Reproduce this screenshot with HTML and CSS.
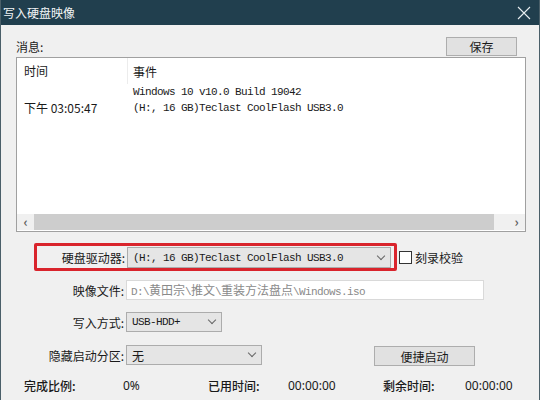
FILE: index.html
```html
<!DOCTYPE html>
<html lang="zh-CN">

<head>
    <meta charset="UTF-8">
    <title>写入硬盘映像</title>
    <link rel="stylesheet" href="styles.css">
</head>

<body>
    <div class="window">
        <!-- 标题栏 -->
        <div class="titlebar">
            <span class="title">写入硬盘映像</span>
            <svg class="close" width="14" height="14" viewBox="0 0 14 14">
                <path d="M1 1 L13 13 M13 1 L1 13" stroke="#e8eef0" stroke-width="1.1" fill="none" />
            </svg>
        </div>

        <div class="content">
            <!-- 消息区 -->
            <div class="msg-head">
                <span>消息:</span>
                <button class="btn btn-save">保存</button>
            </div>
            <div class="listbox">
                <div class="list-header">
                    <div class="col-time">时间</div>
                    <div class="col-event">事件</div>
                </div>
                <div class="list-body">
                    <div class="list-row">
                        <div class="col-time"></div>
                        <div class="col-event mono">Windows 10 v10.0 Build 19042</div>
                    </div>
                    <div class="list-row">
                        <div class="col-time">下午 03:05:47</div>
                        <div class="col-event mono">(H:, 16 GB)Teclast CoolFlash USB3.0</div>
                    </div>
                </div>
                <div class="hscroll">
                    <span class="arrow">&#x2039;</span>
                    <span class="thumb"></span>
                    <span class="arrow">&#x203A;</span>
                </div>
            </div>

            <!-- 设置区 -->
            <div class="row row-drive">
                <div class="highlight">
                    <label class="label label-inner">硬盘驱动器:</label>
                    <div class="combo combo-drive">
                        <span class="mono">(H:, 16 GB)Teclast CoolFlash USB3.0</span>
                        <span class="chev"></span>
                    </div>
                </div>
                <span class="checkbox"></span>
                <span class="check-text">刻录校验</span>
            </div>

            <div class="row row-file">
                <label class="label">映像文件:</label>
                <div class="input mono">D:\<span class="cjk">黄田宗</span>\<span class="cjk">推文</span>\<span class="cjk">重装方法盘点</span>\Windows.iso</div>
            </div>

            <div class="row row-mode">
                <label class="label">写入方式:</label>
                <div class="combo combo-mode">
                    <span class="mono">USB-HDD+</span>
                    <span class="chev"></span>
                </div>
            </div>

            <div class="row row-hide">
                <label class="label">隐藏启动分区:</label>
                <div class="combo combo-hide">
                    <span>无</span>
                    <span class="chev"></span>
                </div>
                <button class="btn btn-boot">便捷启动</button>
            </div>

            <!-- 进度 -->
            <div class="progress">
                <span class="p-label w1">完成比例:</span>
                <span class="p-val w2">0%</span>
                <span class="p-label w3">已用时间:</span>
                <span class="p-val w4">00:00:00</span>
                <span class="p-label w5">剩余时间:</span>
                <span class="p-val">00:00:00</span>
            </div>
        </div>
    </div>
</body>

</html>
```

FILE: styles.css
```css
/* 基础样式 */
body {
    margin: 0;
    font-family: 'Noto Sans CJK SC', 'Noto Sans', sans-serif;
    font-size: 12px;
    color: #1a1a1a;
    background: #f0f0f0;
}

.window {
    width: 540px;
    height: 400px;
    box-sizing: border-box;
    border-left: 1px solid #4a5f69;
    border-right: 1px solid #4a5f69;
    background: #f0f0f0;
    overflow: hidden;
}

/* 标题栏 */
.titlebar {
    height: 25px;
    background: #213f4e;
    color: #f2f5f6;
    display: flex;
    align-items: center;
    justify-content: space-between;
    padding: 0 9px 0 3px;
    margin: 0 -1px;
}

.title {
    font-size: 12px;
    line-height: 25px;
}

.mono {
    font-family: 'Liberation Mono', 'Noto Sans CJK SC', monospace;
    font-size: 11px;
    letter-spacing: -0.6px;
}

.cjk {
    font-family: 'Noto Sans CJK SC', sans-serif;
    font-size: 12px;
    letter-spacing: 0;
}

.content {
    padding: 12px 13px 0 15px;
}

/* 消息标题和保存按钮 */
.msg-head {
    display: flex;
    justify-content: space-between;
    align-items: flex-end;
    height: 20px;
}

.msg-head span {
    line-height: 16px;
    margin-bottom: 2px;
}

.btn {
    font-family: 'Noto Sans CJK SC', sans-serif;
    font-size: 12px;
    background: #e1e1e1;
    border: 1px solid #adadad;
    padding: 0;
    color: #1a1a1a;
    border-radius: 0;
}

.btn-save {
    width: 71px;
    height: 19px;
    margin-bottom: 1px;
    margin-right: 9px;
    line-height: 16px;
}

/* 列表框 */
.listbox {
    width: 510px;
    height: 175px;
    box-sizing: border-box;
    border: 1px solid #a0a0a0;
    background: #ffffff;
    display: flex;
    flex-direction: column;
}

.list-header {
    display: flex;
    height: 26px;
    align-items: center;
}

.list-header .col-time {
    border-right: 1px solid #ececec;
    height: 26px;
    line-height: 26px;
}

.col-time {
    width: 111px;
    box-sizing: border-box;
    padding-left: 7px;
    flex-shrink: 0;
}

.col-event {
    padding-left: 5px;
}

.list-body {
    flex: 1;
}

.list-row {
    display: flex;
    height: 16px;
    line-height: 16px;
}

.list-row .col-time {
    font-family: 'Noto Sans CJK SC', 'Noto Sans', sans-serif;
    font-size: 12px;
}

.list-row .col-event {
    padding-left: 5px;
}

/* 水平滚动条 */
.hscroll {
    height: 16px;
    background: #f0f0f0;
    display: flex;
    align-items: center;
    margin: 0 0 1px 0;
}

.arrow {
    width: 17px;
    text-align: center;
    color: #606060;
    font-size: 13px;
    font-weight: bold;
    line-height: 16px;
}

.thumb {
    flex: 1;
    height: 16px;
    background: #cdcdcd;
    margin: 0 14px 0 0;
}

/* 表单行 */
.row {
    display: flex;
    align-items: center;
}

.label {
    width: 110px;
    text-align: right;
    padding-right: 2px;
    box-sizing: border-box;
    flex-shrink: 0;
}

.row-drive {
    margin-top: 11px;
}

.highlight {
    display: flex;
    align-items: center;
    margin-left: 18px;
    border: 3px solid #d9242c;
    border-radius: 2px;
    padding: 1px 3px 0 0;
    background: #f0f0f0;
}

.label-inner {
    width: 90px;
}

.combo {
    height: 21px;
    box-sizing: border-box;
    background: #e5e5e5;
    border: 1px solid #acacac;
    display: flex;
    align-items: center;
    justify-content: space-between;
    padding: 0 6px 0 5px;
}

.combo-drive {
    width: 264px;
}

.chev {
    width: 5px;
    height: 5px;
    border-right: 1px solid #666;
    border-bottom: 1px solid #666;
    transform: rotate(45deg);
    margin-bottom: 4px;
}

.checkbox {
    width: 11px;
    height: 11px;
    border: 1px solid #333;
    background: #fff;
    margin-left: 2px;
    margin-top: 1px;
}

.check-text {
    margin-left: 3px;
}

.row-file {
    margin-top: 9px;
}

.input {
    width: 358px;
    height: 20px;
    box-sizing: border-box;
    background: #fff;
    border: 1px solid #d9d9d9;
    color: #8a8a8a;
    line-height: 18px;
    padding-left: 4px;
    white-space: nowrap;
}

.input .cjk {
    color: #8a8a8a;
}

.row-mode {
    margin-top: 12px;
}

.combo-mode {
    width: 96px;
    height: 20px;
}

.row-hide {
    margin-top: 12px;
}

.combo-hide {
    width: 136px;
    height: 20px;
}

.btn-boot {
    width: 101px;
    height: 20px;
    margin-left: 112px;
    margin-top: 2px;
}

/* 进度行 */
.progress {
    display: flex;
    margin-top: 12px;
    margin-left: 8px;
    line-height: 16px;
}

.p-label {
    font-weight: 500;
}

.p-val {
    font-family: 'Noto Sans', 'Noto Sans CJK SC', sans-serif;
    font-size: 12px;
}

.w1 { width: 99px; }
.w2 { width: 85px; }
.w3 { width: 80px; }
.w4 { width: 95px; }
.w5 { width: 82px; }
```
